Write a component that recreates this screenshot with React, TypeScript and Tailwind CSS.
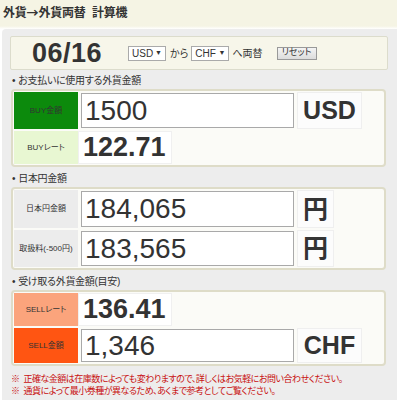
import React from 'react'

const jp = "font-['Liberation_Sans','Noto_Sans_CJK_JP',sans-serif] [font-feature-settings:'palt']"

function InputRow({ label, labelCls, value, unit, unitW, h }: { label: string, labelCls: string, value: string, unit: string, unitW: string, h: string }){
  return (
    <div className={`flex ${h}`}>
      <div className={`w-[64px] flex items-center justify-center text-[8px] text-[#333] ${labelCls}`}>{label}</div>
      <div className="ml-[3px] w-[213px] my-[1px] border border-[#a9a9a9] bg-white flex items-center pl-[3px] text-[28px] text-[#333] leading-none">{value}</div>
      <div className={`ml-[3px] ${unitW} bg-[#fcfcfc] border border-[#efefef] flex items-center justify-center font-bold text-[25px] text-[#333] leading-none`}>{unit}</div>
    </div>
  )
}

function RateRow({ label, labelCls, value, h }: { label: string, labelCls: string, value: string, h: string }){
  return (
    <div className={`flex ${h}`}>
      <div className={`w-[64px] flex items-center justify-center text-[8px] text-[#333] ${labelCls}`}>{label}</div>
      <div className="w-[94px] bg-white border border-[#f0f0f0] flex items-center pl-[4px] font-bold text-[27px] text-[#333] leading-none">{value}</div>
    </div>
  )
}

function SectionTitle({ children, h }: { children: React.ReactNode, h: string }){
  return (
    <div className={`${h} flex items-end pb-[2px] pl-[2px] text-[10px] leading-[12px] tracking-[-0.3px] text-[#333]`}>
      <span className="mr-[3px]">•</span>{children}
    </div>
  )
}

export default function App(){
  return (
    <div className={`w-[397px] h-[400px] overflow-hidden bg-white ${jp}`}>
      <div className="h-[26px] bg-[#f5f4e4] flex items-center pl-[3px] text-[12px] tracking-[-0.2px] font-bold text-[#333]">
        外貨<span className="font-['Noto_Sans_CJK_JP',sans-serif]">→</span>外貨両替&nbsp;&nbsp;計算機
      </div>
      <div className="h-[3px] bg-gradient-to-b from-[#f5f4e4] to-white" />
      <div className="ml-[2px] rounded-tl-[4px] bg-[#ededed] h-[371px] pt-[7px] pl-[8px] pr-[9px]">
        <div className="h-[34px] bg-[#f7f6ea] border border-[#dcdccc] rounded-[2px] flex items-center">
          <div className="ml-[21px] w-[74px] text-[27px] font-bold text-[#333] leading-none tracking-[0.5px]">06/16</div>
          <div className="ml-[22px] w-[38px] h-[15px] border border-[#aaa] bg-white flex items-center justify-between px-[3px] text-[10px] text-[#333]"><span>USD</span><span className="text-[7px]">▼</span></div>
          <span className="ml-[4px] text-[10px] text-[#333]">から</span>
          <div className="ml-[3px] w-[38px] h-[15px] border border-[#aaa] bg-white flex items-center justify-between px-[3px] text-[10px] text-[#333]"><span>CHF</span><span className="text-[7px]">▼</span></div>
          <span className="ml-[3px] text-[10px] text-[#333]">へ両替</span>
          <div className="ml-[14px] w-[40px] h-[13px] border border-[#999] bg-gradient-to-b from-[#f4f4f4] to-[#dcdcdc] flex items-center justify-center text-[9px] text-[#333]">リセット</div>
        </div>

        <SectionTitle h="h-[19px]">お支払いに使用する外貨金額</SectionTitle>
        <div className="ml-[1px] w-[375px] bg-[#fbfbf7] border-2 border-[#dedcc8] rounded-[4px] p-[1px] flex flex-col gap-[2px]">
          <InputRow label="BUY金額" labelCls="bg-[#0c8a0c]" value="1500" unit="USD" unitW="w-[65px]" h="h-[37px]" />
          <RateRow label="BUYレート" labelCls="bg-[#e8f7d2]" value="122.71" h="h-[33px]" />
        </div>

        <SectionTitle h="h-[20px]">日本円金額</SectionTitle>
        <div className="ml-[1px] w-[375px] bg-[#fbfbf7] border-2 border-[#dedcc8] rounded-[4px] p-[1px] flex flex-col gap-[2px]">
          <InputRow label="日本円金額" labelCls="bg-[#ececec]" value="184,065" unit="円" unitW="w-[37px]" h="h-[38px]" />
          <InputRow label="取扱料(-500円)" labelCls="bg-[#ececec]" value="183,565" unit="円" unitW="w-[37px]" h="h-[37px]" />
        </div>

        <SectionTitle h="h-[20px]">受け取る外貨金額(目安)</SectionTitle>
        <div className="ml-[1px] w-[375px] bg-[#fbfbf7] border-2 border-[#dedcc8] rounded-[4px] p-[1px] flex flex-col gap-[2px]">
          <RateRow label="SELLレート" labelCls="bg-[#fba47c]" value="136.41" h="h-[33px]" />
          <InputRow label="SELL金額" labelCls="bg-[#ff5512]" value="1,346" unit="CHF" unitW="w-[65px]" h="h-[35px]" />
        </div>

        <div className="mt-[7px] pl-[1px] text-[9px] leading-[12px] tracking-[-0.5px] text-[#c81010] whitespace-nowrap">
          <div>※&nbsp;&nbsp;正確な金額は在庫数によっても変わりますので、詳しくはお気軽にお問い合わせください。</div>
          <div>※&nbsp;&nbsp;通貨によって最小券種が異なるため、あくまで参考としてご覧ください。</div>
        </div>
      </div>
    </div>
  )
}
